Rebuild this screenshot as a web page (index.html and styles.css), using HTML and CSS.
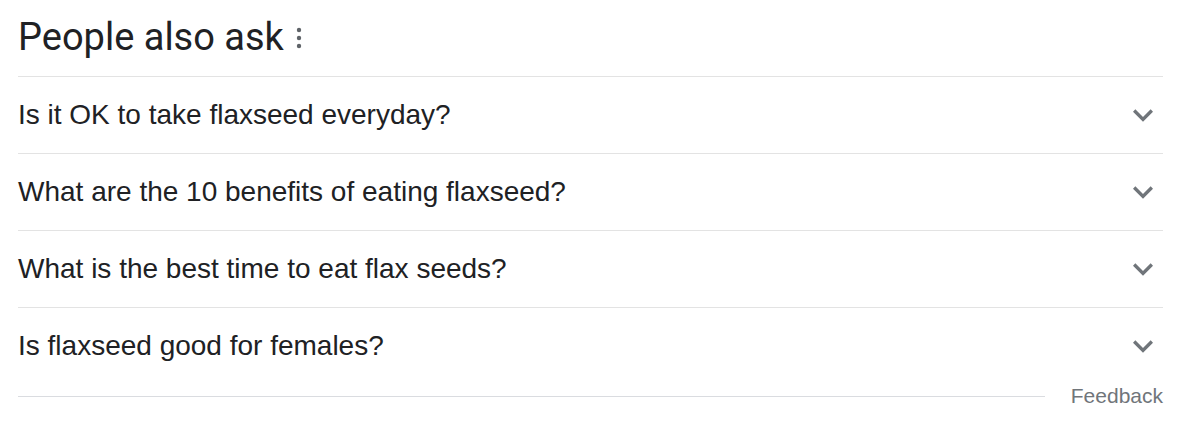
FILE: index.html
```html
<!DOCTYPE html>
<html lang="en">
<head>
<meta charset="utf-8">
<title>People also ask</title>
<link rel="stylesheet" href="styles.css">
</head>
<body>
<div class="paa">
  <div class="paa-header">
    <h2 class="paa-title">People also ask</h2>
    <svg class="kebab" width="6" height="22" viewBox="0 0 6 22" aria-hidden="true">
      <circle cx="3" cy="3" r="2.2"/>
      <circle cx="3" cy="11" r="2.2"/>
      <circle cx="3" cy="19" r="2.2"/>
    </svg>
  </div>
  <div class="paa-list">
    <div class="paa-item">
      <span class="paa-q">Is it OK to take flaxseed everyday?</span>
      <svg class="chev" width="40" height="40" viewBox="0 0 24 24" aria-hidden="true"><path d="M16.59 8.59L12 13.17 7.41 8.59 6 10l6 6 6-6z"/></svg>
    </div>
    <div class="paa-item">
      <span class="paa-q">What are the 10 benefits of eating flaxseed?</span>
      <svg class="chev" width="40" height="40" viewBox="0 0 24 24" aria-hidden="true"><path d="M16.59 8.59L12 13.17 7.41 8.59 6 10l6 6 6-6z"/></svg>
    </div>
    <div class="paa-item">
      <span class="paa-q">What is the best time to eat flax seeds?</span>
      <svg class="chev" width="40" height="40" viewBox="0 0 24 24" aria-hidden="true"><path d="M16.59 8.59L12 13.17 7.41 8.59 6 10l6 6 6-6z"/></svg>
    </div>
    <div class="paa-item">
      <span class="paa-q">Is flaxseed good for females?</span>
      <svg class="chev" width="40" height="40" viewBox="0 0 24 24" aria-hidden="true"><path d="M16.59 8.59L12 13.17 7.41 8.59 6 10l6 6 6-6z"/></svg>
    </div>
  </div>
  <div class="paa-footer">
    <div class="footer-line"></div>
    <span class="feedback">Feedback</span>
  </div>
</div>
</body>
</html>
```
FILE: styles.css
```css
html, body {
  margin: 0;
  padding: 0;
  background: #ffffff;
}

.paa {
  margin-left: 18px;
  width: 1145px;
  color: #202124;
}

.paa-header {
  height: 76px;
  display: flex;
  align-items: center;
  border-bottom: 1px solid #e3e3e3;
}

.paa-title {
  margin: 0;
  font-family: Roboto, "Liberation Sans", Arial, sans-serif;
  font-weight: 400;
  font-size: 38px;
  line-height: 44px;
  color: #202124;
  padding-bottom: 2px;
}

.kebab {
  margin-left: 12px;
  fill: #5f6368;
}

.paa-item {
  height: 76px;
  display: flex;
  align-items: center;
  justify-content: space-between;
  border-bottom: 1px solid #e3e3e3;
}

.paa-item:last-child {
  border-bottom: none;
}

.paa-q {
  font-family: "Liberation Sans", Arial, sans-serif;
  font-size: 28px;
  line-height: 36px;
  color: #202124;
}

.chev {
  fill: #70757a;
  flex: none;
}

.paa-footer {
  height: 24px;
  display: flex;
  align-items: center;
}

.footer-line {
  flex: 1;
  height: 1px;
  background: #dadce0;
  margin-right: 26px;
}

.feedback {
  font-family: "Liberation Sans", Arial, sans-serif;
  font-size: 21px;
  line-height: 24px;
  color: #70757a;
}
```
